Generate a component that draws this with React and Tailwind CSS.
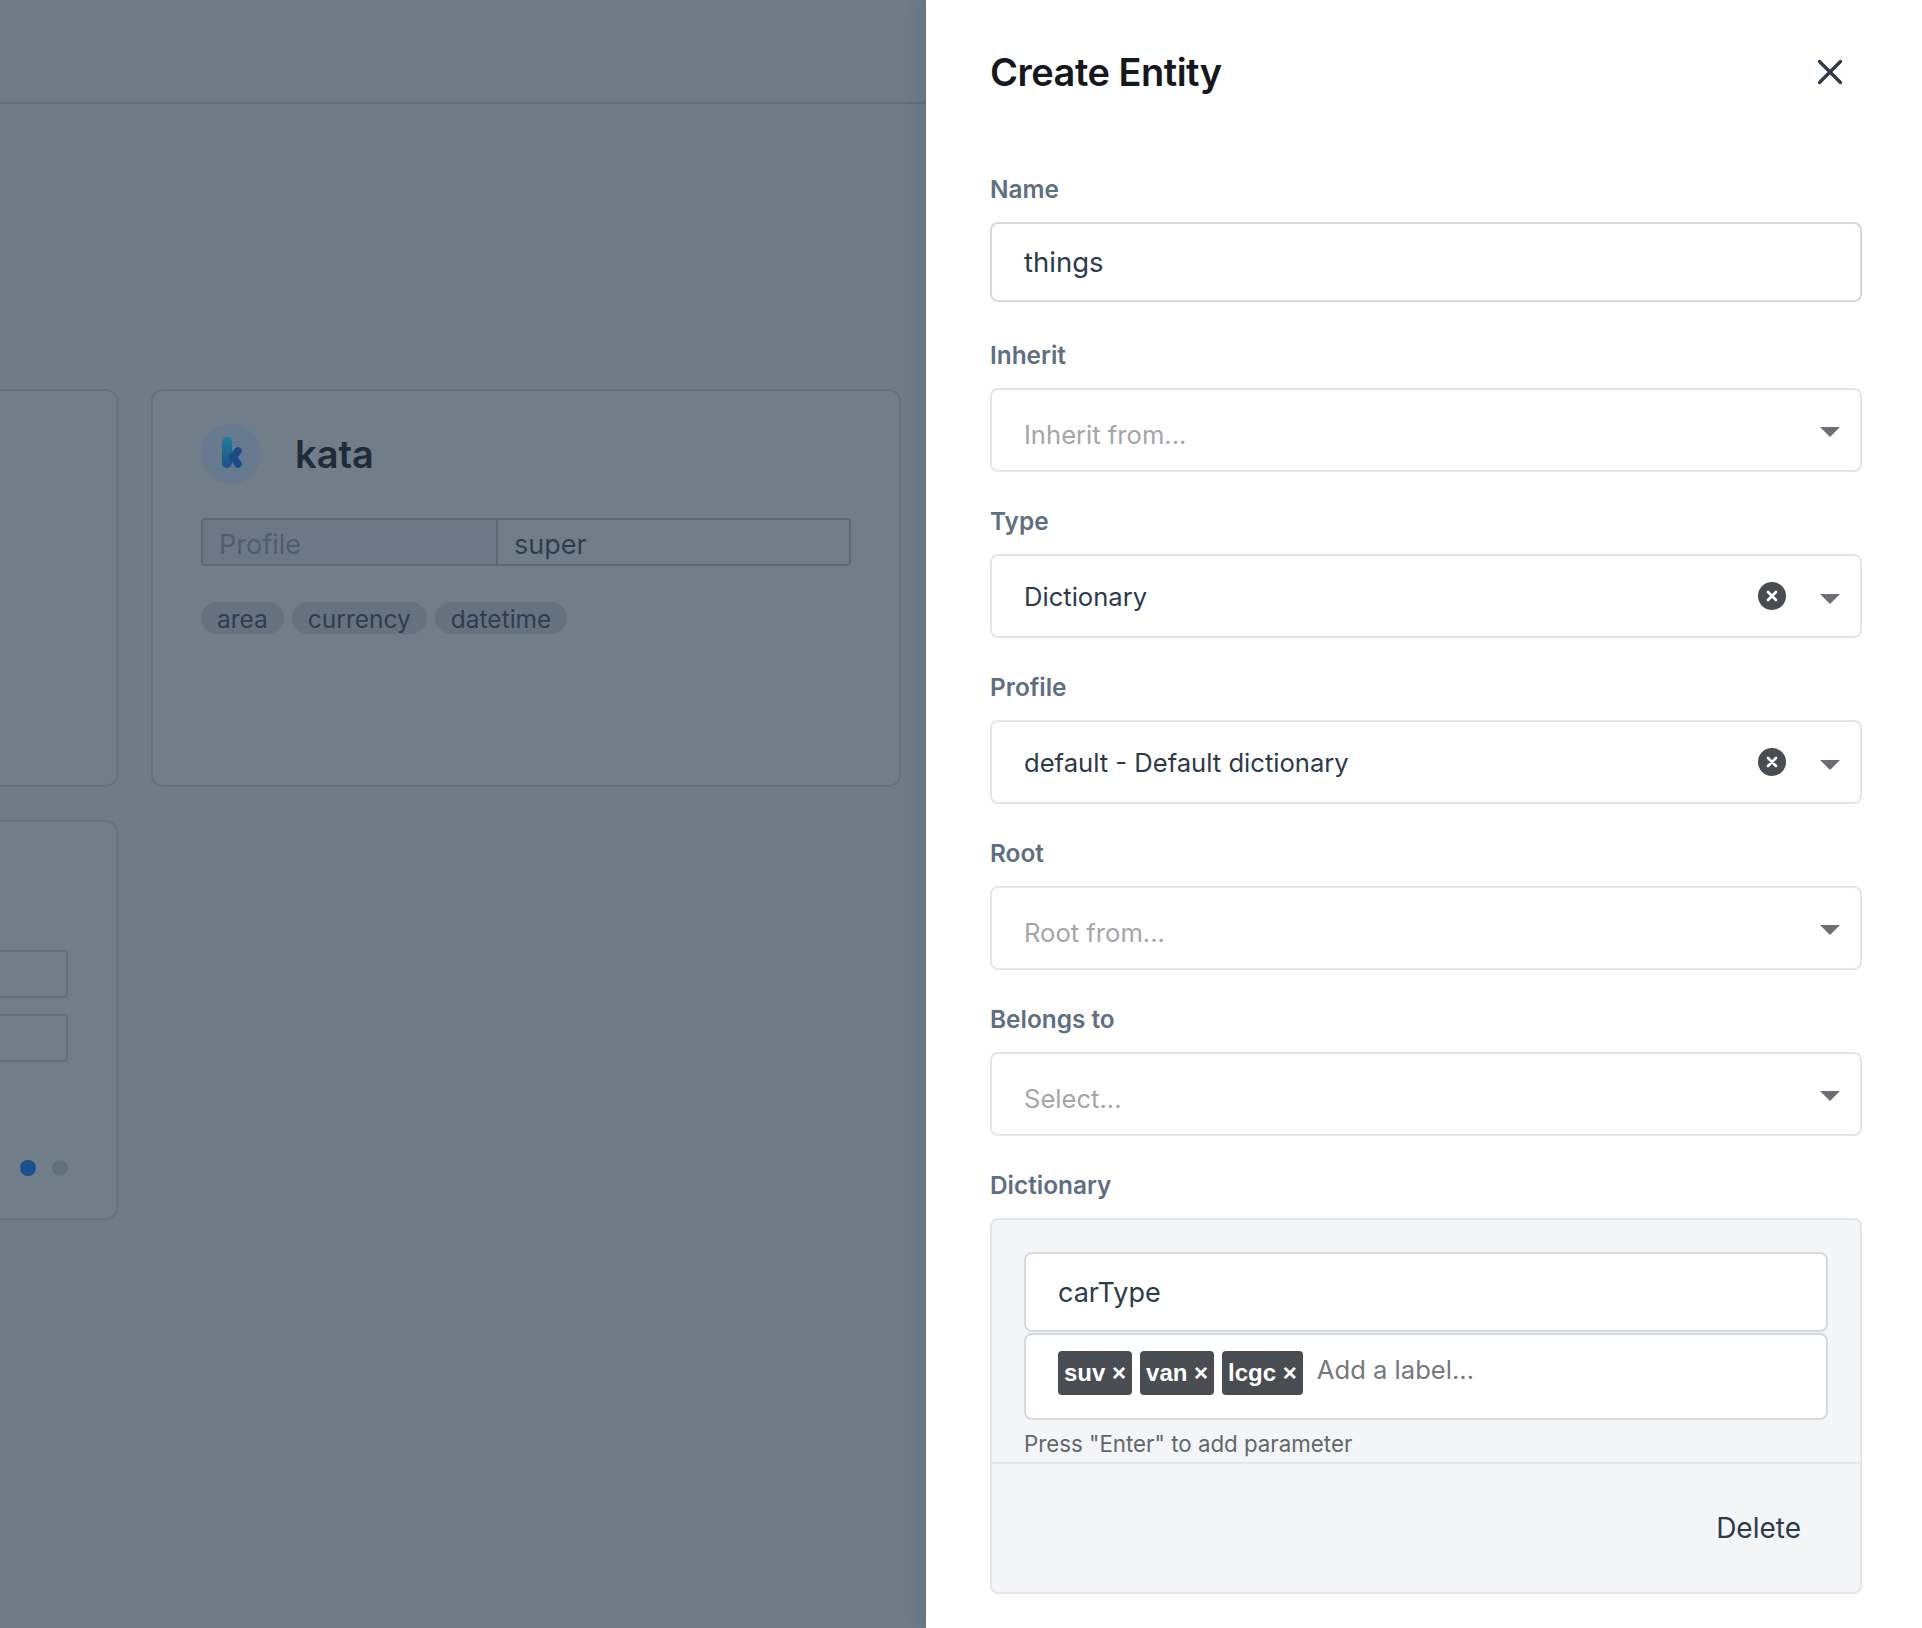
import React from 'react';
import { X } from 'lucide-react';

const Arrow = () => (
  <svg width="20" height="10" viewBox="0 0 20 10" className="shrink-0">
    <path d="M0 0H20L10 10Z" fill="#6b6f73" />
  </svg>
);

const ClearIcon = () => (
  <svg width="28" height="28" viewBox="0 0 28 28" className="shrink-0">
    <circle cx="14" cy="14" r="14" fill="#494c50" />
    <path d="M10 10L18 18M18 10L10 18" stroke="#fff" strokeWidth="2.6" strokeLinecap="round" />
  </svg>
);

const KataLogo = () => (
  <svg width="60" height="60" viewBox="0 0 60 60">
    <defs>
      <linearGradient id="stem" gradientUnits="userSpaceOnUse" x1="26" y1="13" x2="26" y2="44">
        <stop offset="0" stopColor="#1f7f98" />
        <stop offset="1" stopColor="#1d4f8a" />
      </linearGradient>
    </defs>
    <circle cx="30" cy="30" r="30" fill="#677a8f" />
    <path d="M26 18V39" stroke="url(#stem)" strokeWidth="10" strokeLinecap="round" />
    <path d="M37 27L32 33L37 40" stroke="#1b4a86" strokeWidth="7.5" strokeLinecap="round" strokeLinejoin="round" fill="none" />
  </svg>
);

const Field = ({ label, children }) => (
  <div>
    <div className="h-8 mb-4 pb-px flex items-center text-[24.4px] font-semibold text-[#5f6f82]">{label}</div>
    {children}
  </div>
);

const Select = ({ value, placeholder }) => (
  <div className="h-[84px] flex items-center pl-[32px] pr-5 bg-white rounded-lg border-2 border-[#e3e6ea]">
    {value ? (
      <span className="flex-1 text-[25.6px] text-[#2d3a4b] pt-[3px]">{value}</span>
    ) : (
      <span className="flex-1 text-[25.6px] text-[#a3a6aa] pt-[11px]">{placeholder}</span>
    )}
    {value && <ClearIcon />}
    <div className={value ? 'ml-[34px] pt-[5px]' : 'ml-[34px] pt-[4px]'}>
      <Arrow />
    </div>
  </div>
);

const Tag = ({ text }) => (
  <span className="h-11 px-[6px] flex items-center bg-[#494c50] rounded text-white text-[24px] font-bold font-['Liberation_Sans',sans-serif]">
    {text} ×
  </span>
);

const Pill = ({ text }) => (
  <span className="h-8 px-4 pt-[2px] flex items-center rounded-full bg-[#667280] text-[24.5px] text-[#2f3d50]">{text}</span>
);

export default function App() {
  return (
    <div className="w-[1922px] h-[1628px] flex overflow-hidden bg-[#6f7b87] font-['Inter',sans-serif]">
      {/* Dimmed page */}
      <div className="w-[926px] shrink-0 overflow-hidden">
        <div className="h-[104px] border-b-2 border-[#616e7b]" />
        <div className="ml-[-632px] mt-[285px] grid grid-cols-[750px_750px] gap-x-[33px] gap-y-[33px]">
          <div className="h-[398px] rounded-xl border-2 border-[#65727f] bg-[#717d89]" />
          <div className="h-[398px] rounded-xl border-2 border-[#65727f] bg-[#717d89] pt-[33px] px-[48px]">
            <div className="flex items-center gap-[34px]">
              <KataLogo />
              <span className="text-[38px] font-semibold text-[#1f2c38]">kata</span>
            </div>
            <div className="mt-[34px] h-12 flex border-2 border-[#5c6a78] rounded-sm text-[27px]">
              <div className="w-[295px] pl-4 pt-[6px] flex items-center border-r-2 border-[#5c6a78] bg-[#6c7885] text-[#4f5d6d]">Profile</div>
              <div className="flex-1 pl-4 pt-[6px] flex items-center text-[#2f3d50]">super</div>
            </div>
            <div className="mt-9 flex gap-2">
              <Pill text="area" />
              <Pill text="currency" />
              <Pill text="datetime" />
            </div>
          </div>
          <div className="h-[400px] rounded-xl border-2 border-[#65727f] bg-[#717d89] flex flex-col items-end pr-[48px] pt-[128px]">
            <div className="w-[300px] h-12 rounded-sm border-2 border-[#616e7b]" />
            <div className="w-[300px] h-12 mt-4 rounded-sm border-2 border-[#616e7b]" />
            <div className="mt-[98px] flex gap-4">
              <div className="w-4 h-4 rounded-full bg-[#18508b]" />
              <div className="w-4 h-4 rounded-full bg-[#626f7d]" />
            </div>
          </div>
        </div>
      </div>

      {/* Drawer */}
      <div className="flex-1 bg-white pl-16 pr-[60px] pt-10 shadow-[-6px_0_16px_rgba(50,60,70,0.12)]">
        <div className="h-16 mb-[70px] flex items-center justify-between">
          <h1 className="text-[38px] font-semibold text-[#16181d] tracking-[-0.5px]">Create Entity</h1>
          <X size={42} strokeWidth={1.9} className="text-[#2d3a4b] mr-[11px]" />
        </div>

        <div className="flex flex-col gap-[34px]">
          <Field label="Name">
            <div className="h-20 mb-1 pt-[2px] flex items-center pl-[32px] bg-white rounded-lg border-2 border-[#d5dae0] text-[27.5px] text-[#2d3a4b]">things</div>
          </Field>
          <Field label="Inherit"><Select placeholder="Inherit from..." /></Field>
          <Field label="Type"><Select value="Dictionary" /></Field>
          <Field label="Profile"><Select value="default - Default dictionary" /></Field>
          <Field label="Root"><Select placeholder="Root from..." /></Field>
          <Field label="Belongs to"><Select placeholder="Select..." /></Field>
          <Field label="Dictionary">
            <div className="h-[376px] rounded-lg border-2 border-[#e3e6ea] bg-[#f4f5f7] flex flex-col">
              <div className="h-[244px] px-[32px] pt-[32px] border-b-2 border-[#e3e6ea]">
                <div className="h-20 pt-[2px] flex items-center pl-[32px] bg-white rounded-lg border-2 border-[#d5dae0] text-[27px] text-[#2d3a4b]">carType</div>
                <div className="h-[87px] mt-px flex items-center gap-2 pl-[32px] pb-[8px] bg-white rounded-lg border-2 border-[#d5dae0]">
                  <Tag text="suv" />
                  <Tag text="van" />
                  <Tag text="lcgc" />
                  <span className="ml-[6px] mb-[4px] text-[25.6px] text-[#75787c]">Add a label...</span>
                </div>
                <div className="mt-[9px] text-[22.3px] leading-[30px] text-[#62666b]">Press "Enter" to add parameter</div>
              </div>
              <div className="flex-1 flex items-center justify-end pr-[59px] text-[28px] text-[#2d3a4b]">Delete</div>
            </div>
          </Field>
        </div>
      </div>
    </div>
  );
}
